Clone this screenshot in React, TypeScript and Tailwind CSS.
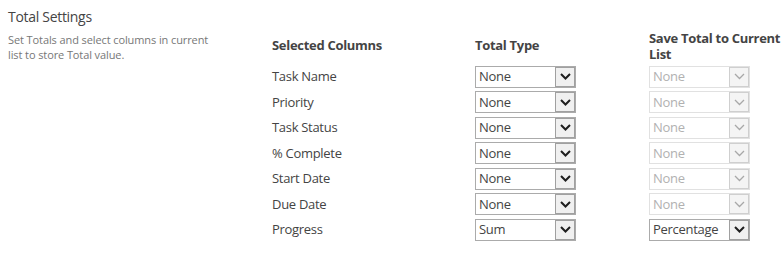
import React from 'react'

const rows = [
    { name: 'Task Name', total: 'None', save: 'None', saveOn: false },
    { name: 'Priority', total: 'None', save: 'None', saveOn: false },
    { name: 'Task Status', total: 'None', save: 'None', saveOn: false },
    { name: '% Complete', total: 'None', save: 'None', saveOn: false },
    { name: 'Start Date', total: 'None', save: 'None', saveOn: false },
    { name: 'Due Date', total: 'None', save: 'None', saveOn: false },
    { name: 'Progress', total: 'Sum', save: 'Percentage', saveOn: true },
]

function Chevron({ disabled }: { disabled?: boolean }) {
    return (
        <svg width="11" height="7" viewBox="0 0 11 7" fill="none">
            <path
                d="M1 1 L5.5 5.5 L10 1"
                stroke={disabled ? '#a8a8a8' : '#1f1f1f'}
                strokeWidth={disabled ? 1.3 : 2}
            />
        </svg>
    )
}

function FakeSelect({ value, disabled }: { value: string; disabled?: boolean }) {
    return (
        <div
            className={`flex h-[22px] w-[101px] border bg-white ${
                disabled ? 'border-[#e1e1e1] text-[#b1b1b1]' : 'border-[#ababab] text-[#444444]'
            }`}
        >
            <span className="flex flex-1 items-center pl-[3px] text-[13px] leading-none">{value}</span>
            <div
                className={`flex w-[20px] items-center justify-center border ${
                    disabled ? 'border-[#cfcfcf] bg-[#f4f4f4]' : 'border-[#a0a0a0] bg-[#f0f0f0]'
                }`}
            >
                <Chevron disabled={disabled} />
            </div>
        </div>
    )
}

export default function App() {
    return (
        <div className="flex h-[254px] w-[784px] items-start bg-white font-['Open_Sans',sans-serif] text-[#444444]">
            {/* Section description */}
            <div className="w-[272px] shrink-0 pl-2 pt-[7px]">
                <h2 className="text-[14px] leading-[20px] tracking-[-0.3px] text-[#444444]">Total Settings</h2>
                <p className="mt-[5px] w-[212px] text-[11px] leading-[15px] tracking-[-0.1px] text-[#777777]">
                    Set Totals and select columns in current list to store Total value.
                </p>
            </div>

            {/* Totals grid */}
            <div className="grid grid-cols-[203px_174px_1fr] content-start pt-[28px] text-[13px] tracking-[-0.3px]">
                <div className="flex h-[36px] items-center font-bold">Selected Columns</div>
                <div className="flex h-[36px] items-center font-bold">Total Type</div>
                <div className="flex h-[36px] items-center font-bold leading-[16px]">
                    Save Total to Current List
                </div>

                {rows.map((r) => (
                    <React.Fragment key={r.name}>
                        <div className="flex h-[25.5px] items-center">{r.name}</div>
                        <div className="flex h-[25.5px] items-center">
                            <FakeSelect value={r.total} />
                        </div>
                        <div className="flex h-[25.5px] items-center">
                            <FakeSelect value={r.save} disabled={!r.saveOn} />
                        </div>
                    </React.Fragment>
                ))}
            </div>
        </div>
    )
}
